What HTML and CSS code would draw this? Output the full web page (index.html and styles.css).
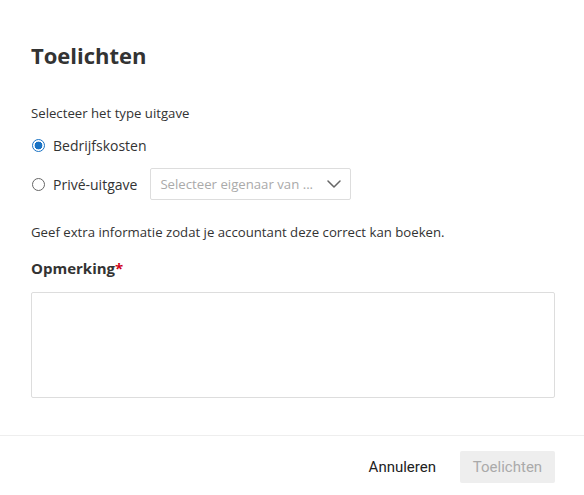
FILE: index.html
```html
<!DOCTYPE html>
<html lang="nl">
<head>
<meta charset="utf-8">
<link rel="stylesheet" href="styles.css">
</head>
<body>
<div class="dialog">
  <div class="content">
    <h1 class="title">Toelichten</h1>
    <p class="label">Selecteer het type uitgave</p>
    <div class="radios">
      <label class="radio-row">
        <span class="radio checked"></span>
        <span class="radio-text">Bedrijfskosten</span>
      </label>
      <label class="radio-row">
        <span class="radio"></span>
        <span class="radio-text">Privé-uitgave</span>
        <span class="select">
          <span class="placeholder">Selecteer eigenaar van ...</span>
          <svg class="chevron" width="14" height="8" viewBox="0 0 14 8"><path d="M1 1l6 6 6-6" fill="none" stroke="#666" stroke-width="1.5" stroke-linecap="round" stroke-linejoin="round"/></svg>
        </span>
      </label>
    </div>
    <p class="info">Geef extra informatie zodat je accountant deze correct kan boeken.</p>
    <h2 class="field-label">Opmerking<span class="req">*</span></h2>
    <div class="textarea"></div>
  </div>
  <div class="footer">
    <button class="btn-cancel">Annuleren</button>
    <button class="btn-primary" disabled>Toelichten</button>
  </div>
</div>
</body>
</html>
```
FILE: styles.css
```css
* { box-sizing: border-box; }
html, body { margin: 0; padding: 0; background: #fff; }
body { font-family: "Open Sans", "Noto Sans", sans-serif; color: #333; }
.dialog { width: 584px; height: 495px; display: flex; flex-direction: column; }
.content { padding: 40px 29px 0 31px; flex: 1; }
.title { margin: 0; font-size: 22px; font-weight: 700; line-height: 30px; color: #333; }
.label { margin: 34px 0 0; font-size: 13.2px; line-height: 18px; color: #333; }
.radios { margin-top: 13px; display: flex; flex-direction: column; gap: 6px; }
.radio-row { display: flex; align-items: center; height: 32px; }
.radio-row:first-child { height: 20px; margin-bottom: 7px; }
.radio { width: 13px; height: 13px; border-radius: 50%; border: 1.5px solid #666; margin: 0 8px 0 1px; flex: none; }
.radio.checked { border-color: #1a73c4; border-width: 1.5px; background: radial-gradient(circle, #1a73c4 0 3.6px, #fff 4.2px); }
.radio-text { font-size: 14px; color: #333; }
.select { margin-left: 13px; width: 201px; height: 32px; border: 1px solid #ddd; border-radius: 2px; display: flex; align-items: center; justify-content: space-between; padding: 0 9px 0 9px; }
.placeholder { font-size: 13.2px; color: #aaa; }
.chevron { flex: none; }
.info { margin: 23px 0 0; font-size: 13.2px; line-height: 18px; color: #333; }
.field-label { margin: 17px 0 0; font-size: 15px; font-weight: 700; line-height: 20px; color: #333; }
.req { color: #d0021b; }
.textarea { margin-top: 14px; height: 106px; border: 1px solid #ddd; border-radius: 2px; }
.footer { border-top: 1px solid #eee; height: 60px; flex: none; display: flex; align-items: center; justify-content: flex-end; padding: 3px 29px 0 0; gap: 12px; margin-top: 0; }
.btn-cancel { font-family: Roboto, sans-serif; font-size: 15px; color: #222; background: none; border: none; padding: 0 12px; height: 32px; }
.btn-primary { font-family: Roboto, sans-serif; font-size: 15px; color: #aaa; background: #eee; border: none; border-radius: 2px; width: 95px; height: 32px; }
```
